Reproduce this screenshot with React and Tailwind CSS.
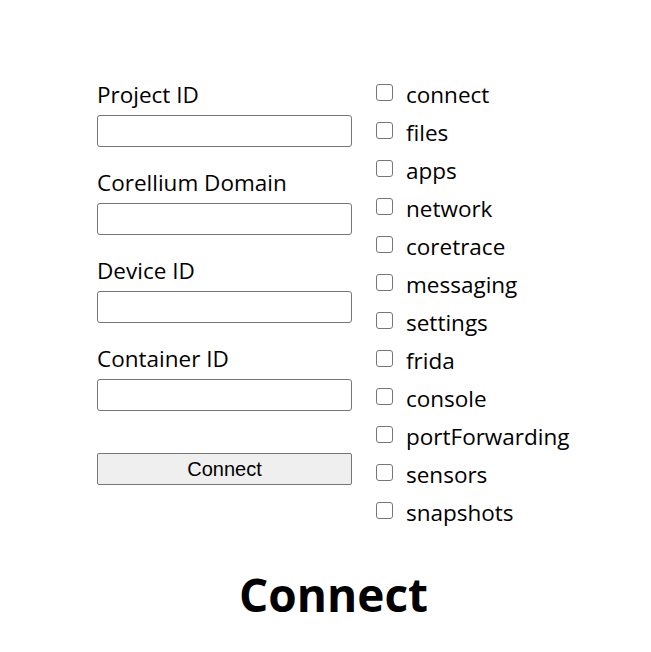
const fields = ["Project ID", "Corellium Domain", "Device ID", "Container ID"];
const modules = [
  "connect",
  "files",
  "apps",
  "network",
  "coretrace",
  "messaging",
  "settings",
  "frida",
  "console",
  "portForwarding",
  "sensors",
  "snapshots",
];

export default function App() {
  return (
    <div className="min-h-[652px] bg-white text-black font-['Open_Sans',sans-serif]">
      <div className="flex pt-[76px] pl-[97px] gap-[24px]">
        <div className="w-[255px] flex flex-col pt-[3px]">
          {fields.map((f) => (
            <div key={f} className="flex flex-col mb-[20px]">
              <label className="text-[22.5px] leading-[32px] mb-[4px]">{f}</label>
              <input
                type="text"
                className="h-[32px] w-[255px] border border-[#767676] rounded-[3px] px-2 outline-none"
              />
            </div>
          ))}
          <button className="mt-[22px] h-[32px] w-[255px] border border-[#767676] rounded-[2px] bg-[#efefef] text-[20px] font-['Liberation_Sans',sans-serif] leading-none">
            Connect
          </button>
        </div>
        <div className="flex flex-col">
          {modules.map((m) => (
            <label key={m} className="flex items-center h-[38px] gap-[13px]">
              <input
                type="checkbox"
                className="appearance-none w-[17px] h-[17px] border border-[#767676] rounded-[3px] bg-white mb-[6px]"
              />
              <span className="text-[22.5px] leading-[38px]">{m}</span>
            </label>
          ))}
        </div>
      </div>
      <h1 className="text-center text-[46px] font-bold mt-[39px] pl-[16px] leading-none">Connect</h1>
    </div>
  );
}
